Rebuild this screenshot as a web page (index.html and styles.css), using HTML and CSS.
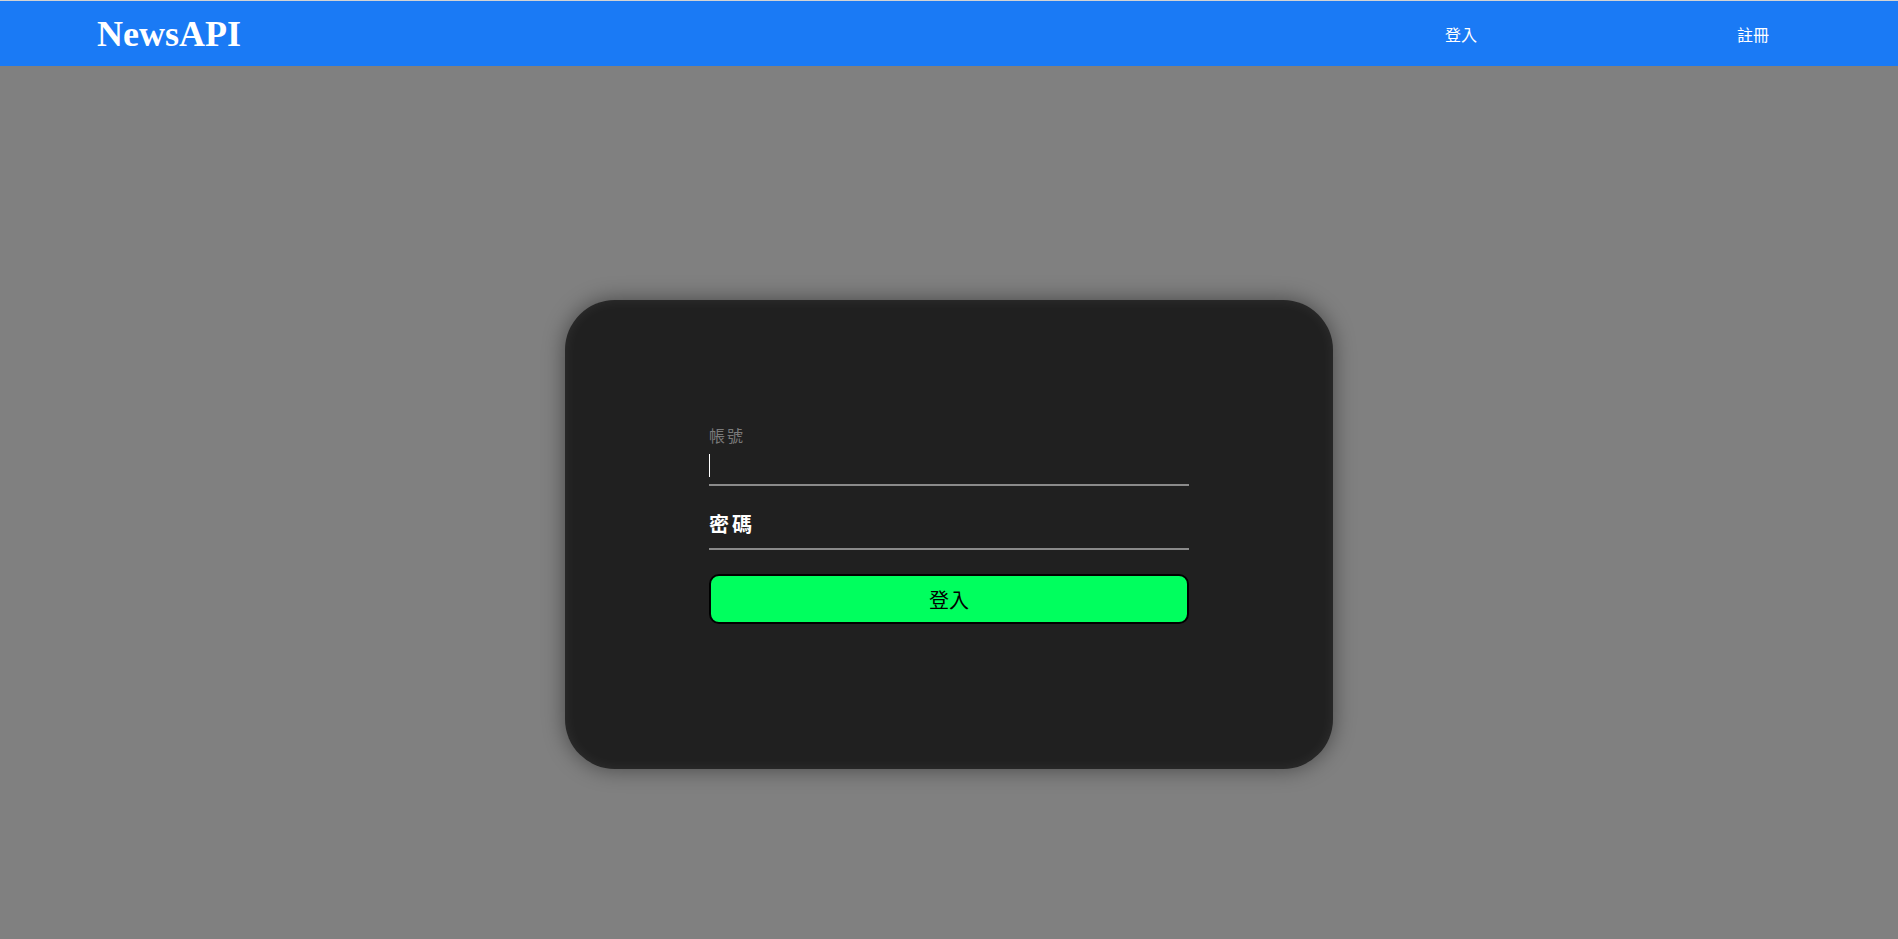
FILE: index.html
```html
<!DOCTYPE html>
<html lang="zh-Hant">
<head>
<meta charset="utf-8">
<title>NewsAPI</title>
<link rel="stylesheet" href="styles.css">
</head>
<body>
<header class="navbar">
  <a class="logo" href="#">NewsAPI</a>
  <nav class="nav-links">
    <a class="nav-link" href="#">登入</a>
    <a class="nav-link" href="#">註冊</a>
  </nav>
</header>
<main class="page">
  <section class="card">
    <form class="login-form">
      <div class="field">
        <label class="field-label field-label--float" for="account">帳號</label>
        <input class="field-input" id="account" type="text">
        <span class="caret"></span>
      </div>
      <div class="field">
        <label class="field-label field-label--rest" for="password">密碼</label>
        <input class="field-input" id="password" type="password">
      </div>
      <button class="submit-btn" type="button">登入</button>
    </form>
  </section>
</main>
</body>
</html>
```
FILE: styles.css
```css
* { box-sizing: border-box; }

html, body {
  margin: 0;
  padding: 0;
}

body {
  background: #808080;
  font-family: "Noto Sans CJK TC", "Noto Sans", sans-serif;
}

.navbar {
  height: 66px;
  border-top: 1px solid #d3d3d3;
  background: #1a7af5;
  display: flex;
  align-items: center;
  padding-left: 97px;
  padding-right: 129px;
}

.logo {
  font-family: "Liberation Serif", serif;
  font-weight: bold;
  font-size: 36px;
  color: #ffffff;
  text-decoration: none;
  line-height: 1;
  margin-top: 1px;
}

.nav-links {
  margin-left: auto;
  display: flex;
  gap: 260px;
}

.nav-link {
  color: #ffffff;
  text-decoration: none;
  font-size: 16px;
  line-height: 20px;
  margin-top: 0;
}

.page {
  height: 937px;
  display: flex;
  align-items: center;
  justify-content: center;
}

.card {
  width: 768px;
  height: 469px;
  border-radius: 50px;
  background: #202020;
  box-shadow: 0 0 22px rgba(0, 0, 0, 0.45), inset 0 0 14px rgba(255, 255, 255, 0.07);
  display: flex;
  justify-content: center;
  padding-top: 124px;
}

.login-form {
  width: 480px;
  display: flex;
  flex-direction: column;
}

.field {
  position: relative;
  padding-top: 20px;
  margin-bottom: 2px;
}

.field-input {
  display: block;
  width: 100%;
  height: 42px;
  background: transparent;
  border: none;
  border-bottom: 2px solid #8a8a8a;
  outline: none;
  color: #ffffff;
  font-family: inherit;
  font-size: 18px;
  padding: 0;
  caret-color: #ffffff;
}

.caret {
  position: absolute;
  left: 0;
  top: 30px;
  width: 1px;
  height: 23px;
  background: #ffffff;
  pointer-events: none;
}

.field-label {
  position: absolute;
  left: 0;
  pointer-events: none;
}

.field-label--float {
  top: 1px;
  font-size: 16px;
  line-height: 20px;
  letter-spacing: 2px;
  color: #7a7a7a;
}

.field-label--rest {
  top: 24px;
  font-size: 20px;
  line-height: 24px;
  font-weight: bold;
  letter-spacing: 3px;
  color: #ffffff;
}

.submit-btn {
  margin-top: 22px;
  height: 50px;
  width: 480px;
  border: 2px solid #000000;
  border-radius: 10px;
  background: #00ff5e;
  color: #000000;
  font-family: inherit;
  font-size: 20px;
  cursor: pointer;
}
```
